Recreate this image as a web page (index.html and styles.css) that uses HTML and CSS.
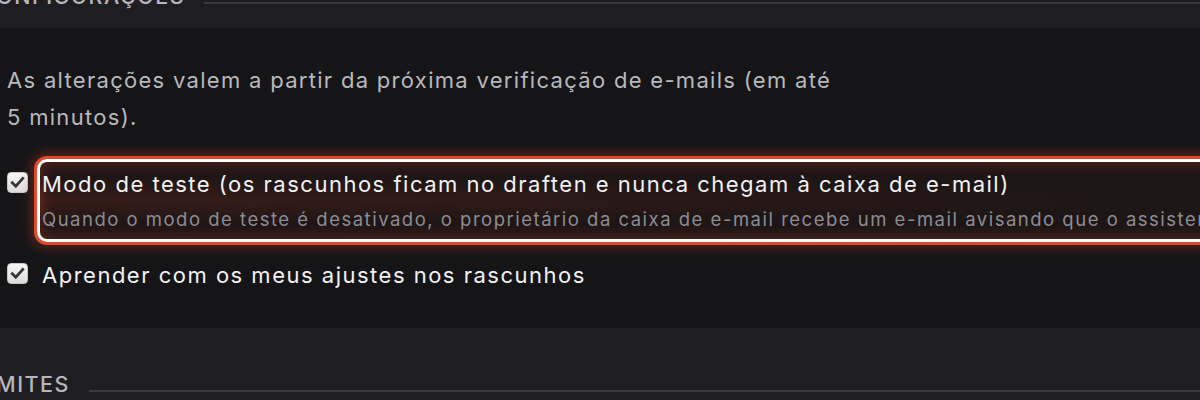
FILE: index.html
```html
<!DOCTYPE html>
<html lang="pt-BR">
<head>
<meta charset="utf-8">
<title>Configurações</title>
<link rel="stylesheet" href="styles.css">
</head>
<body>
  <div class="section-head head-top">
    <h2 class="section-title">Configurações</h2>
    <div class="section-rule"></div>
  </div>

  <section class="card">
    <p class="note">As alterações valem a partir da próxima verificação de e-mails (em até 5&nbsp;minutos).</p>

    <div class="option option-first">
      <span class="check" aria-hidden="true">
        <svg viewBox="0 0 20 20" width="17" height="17"><path d="M3.8 10.2 L8 14.4 L16.2 5.2" fill="none" stroke="#353537" stroke-width="3.2" stroke-linecap="square" stroke-linejoin="miter"/></svg>
      </span>
      <div class="option-body">
        <span class="highlight-ring"></span>
        <div class="option-label">Modo de teste (os rascunhos ficam no draften e nunca chegam à caixa de e-mail)</div>
        <div class="option-hint">Quando o modo de teste é desativado, o proprietário da caixa de e-mail recebe um e-mail avisando que o assistente passou a enviar rascunhos.</div>
      </div>
    </div>

    <div class="option option-second">
      <span class="check" aria-hidden="true">
        <svg viewBox="0 0 20 20" width="17" height="17"><path d="M3.8 10.2 L8 14.4 L16.2 5.2" fill="none" stroke="#353537" stroke-width="3.2" stroke-linecap="square" stroke-linejoin="miter"/></svg>
      </span>
      <div class="option-body">
        <div class="option-label">Aprender com os meus ajustes nos rascunhos</div>
      </div>
    </div>
  </section>

  <div class="section-head head-bottom">
    <h2 class="section-title">Limites</h2>
    <div class="section-rule"></div>
  </div>
</body>
</html>
```

FILE: styles.css
```css
html, body {
  margin: 0;
  padding: 0;
}

body {
  width: 1200px;
  height: 400px;
  overflow: hidden;
  background: #1e1e22;
  font-family: "Inter", "Noto Sans", "Liberation Sans", sans-serif;
  color: #e8e8ea;
}

.section-head {
  display: flex;
  align-items: baseline;
  gap: 19px;
  margin-left: -21px;
}

.head-top {
  margin-top: -16px;
  height: 44px;
}

.head-bottom {
  margin-top: 44px;
  margin-left: -25px;
}

.section-title {
  margin: 0;
  font-size: 21.5px;
  font-weight: 500;
  line-height: 24px;
  letter-spacing: 1.5px;
  text-transform: uppercase;
  color: #b6b6bc;
  white-space: nowrap;
}

.section-rule {
  flex: 1;
  height: 2px;
  background: #38383e;
}

.card {
  background: #151517;
  height: 300px;
  box-sizing: border-box;
  padding: 34px 0 0 7px;
}

.note {
  margin: 0;
  max-width: 850px;
  font-size: 22px;
  line-height: 37px;
  letter-spacing: 1.3px;
  color: #b9b9bd;
}

.option {
  display: flex;
  align-items: flex-start;
  gap: 14px;
}

.option-first {
  margin-top: 33px;
}

.option-second {
  margin-top: 29px;
}

.check {
  flex: none;
  width: 21px;
  height: 21px;
  margin-top: 3px;
  box-sizing: border-box;
  border-radius: 4px;
  background: linear-gradient(#f6f6f6, #dcdcdc);
  border: 1px solid #c4c4c4;
  display: flex;
  align-items: center;
  justify-content: center;
}

.option-body {
  position: relative;
  z-index: 0;
  white-space: nowrap;
}

.option-label {
  font-size: 22px;
  line-height: 30px;
  letter-spacing: 1.5px;
  color: #f2f2f4;
}

.option-hint {
  margin-top: 8px;
  font-size: 18.5px;
  line-height: 24px;
  letter-spacing: 1.5px;
  color: #8c8c92;
}

.highlight-ring {
  position: absolute;
  z-index: -1;
  top: -10px;
  bottom: -11px;
  left: -5px;
  right: -400px;
  border: 3px solid #ffffff;
  border-radius: 10px;
  background: radial-gradient(ellipse at left center, rgba(110, 40, 25, 0.38), rgba(60, 25, 20, 0.26) 40%, rgba(40, 20, 18, 0.2));
  box-shadow:
    0 0 0 3px #e4482b,
    0 0 12px 6px rgba(228, 72, 43, 0.32),
    inset 0 0 14px 2px rgba(228, 72, 43, 0.3);
}
```
